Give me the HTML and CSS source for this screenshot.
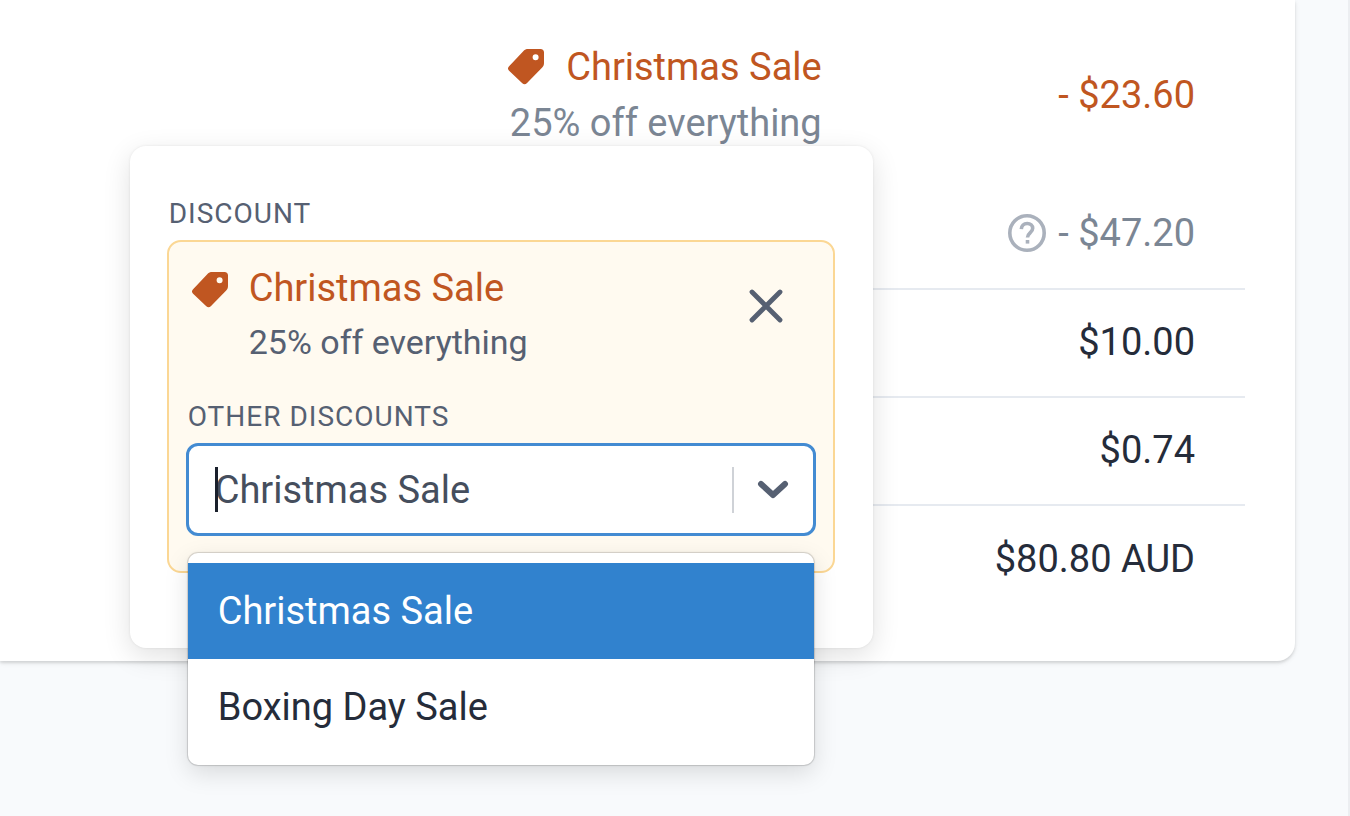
FILE: index.html
```
<!DOCTYPE html>
<html lang="en">
<head>
<meta charset="utf-8">
<meta name="viewport" content="width=device-width, initial-scale=1">
<title>Order summary</title>
<link rel="stylesheet" href="styles.css">
</head>
<body>
<svg class="sprite" aria-hidden="true">
  <symbol id="tag" viewBox="0 0 36 36">
    <path fill="currentColor" fill-rule="evenodd" d="M16.2 1.2C17.4.3 18.600 0 20 0h12.500C34.700 0 36 1.300 36 3.500V14c0 1.900-.5 3.200-1.800 4.500L18.800 34.200c-1.500 1.500-3 1.500-4.500 0L1.100 21.800c-1.500-1.500-1.500-3.100 0-4.600zM27.600 5.200a3 3 0 1 0 0 6 3 3 0 0 0 0-6z"/>
  </symbol>
</svg>
<main class="page">
  <section class="card">
    <table class="summary">
      <tbody>
        <tr class="discount-row">
          <th scope="row">
            <div class="anchor">
              <button type="button" class="discount">
                <span class="discount-name"><svg class="tag"><use href="#tag"/></svg>Christmas Sale</span>
                <span class="discount-note">25% off everything</span>
              </button>
              <div class="popover" role="dialog" aria-label="Discount">
                <h2 class="label">Discount</h2>
                <div class="panel">
                  <div class="applied">
                    <svg class="tag"><use href="#tag"/></svg>
                    <div class="applied-text">
                      <p class="applied-name">Christmas Sale</p>
                      <p class="applied-note">25% off everything</p>
                    </div>
                    <button type="button" class="close" aria-label="Remove discount">
                      <svg viewBox="0 0 34 34"><path d="M3 3l28 28M31 3L3 31"/></svg>
                    </button>
                  </div>
                  <label class="label other" for="other">Other discounts</label>
                  <div class="picker">
                    <div class="control">
                      <input id="other" class="field" type="text" role="combobox" aria-expanded="true" aria-controls="options" value="Christmas Sale">
                      <span class="caret"></span>
                      <span class="divider"></span>
                      <button type="button" class="toggle" aria-label="Toggle options">
                        <svg viewBox="0 0 32 20"><path d="M4 4l12 11L28 4"/></svg>
                      </button>
                    </div>
                    <ul class="menu" id="options" role="listbox">
                      <li class="option selected" role="option" aria-selected="true">Christmas Sale</li>
                      <li class="option" role="option" aria-selected="false">Boxing Day Sale</li>
                    </ul>
                  </div>
                </div>
              </div>
            </div>
          </th>
          <td class="accent">- $23.60</td>
        </tr>
        <tr class="saving-row">
          <th></th>
          <td class="muted">
            <span class="saving">
              <svg class="help" viewBox="0 0 38 38"><circle cx="19" cy="19" r="17.200"/><path d="M13.300 15.200c.2-3.500 2.500-5.700 5.900-5.700 3.300 0 5.500 2 5.500 4.800 0 4.500-5.200 4.700-5.200 9.100"/><path class="dot" d="M17.700 26h3.600v3.600h-3.600z"/></svg>
              - $47.20
            </span>
          </td>
        </tr>
        <tr class="line-row"><th></th><td>$10.00</td></tr>
        <tr class="line-row"><th></th><td>$0.74</td></tr>
        <tr class="line-row"><th></th><td>$80.80 AUD</td></tr>
      </tbody>
    </table>
  </section>
</main>
</body>
</html>
```

FILE: styles.css
```
* {
  box-sizing: border-box;
}

body {
  margin: 0;
  background: #f8fafc;
  color: #252c3a;
  font-family: Roboto, "Liberation Sans", sans-serif;
  font-size: 38px;
  line-height: 56px;
}

button,
input {
  font: inherit;
  color: inherit;
  border: 0;
  padding: 0;
  background: none;
}

h2,
p,
ul {
  margin: 0;
  padding: 0;
  font-weight: 400;
}

.sprite {
  position: absolute;
  width: 0;
  height: 0;
}

.page {
  min-height: 100vh;
  padding-right: 53px;
  border-right: 2px solid #eceef1;
}

.card {
  padding: 0 50px 48px 0;
  background: #fff;
  border-radius: 0 0 18px 0;
  box-shadow: 0 2px 3px rgba(0, 0, 0, 0.12), 0 2px 6px rgba(0, 0, 0, 0.06);
}

.summary {
  width: 100%;
  border-collapse: collapse;
}

.summary th,
.summary td {
  padding: 0;
  font-weight: 400;
  text-align: right;
  white-space: nowrap;
}

.summary td {
  width: 34%;
  padding-right: 50px;
}

.discount-row > * {
  height: 190px;
}

.saving-row > * {
  height: 99px;
  vertical-align: top;
}

.saving-row td {
  padding-top: 15px;
}

.line-row td {
  height: 108px;
  padding-bottom: 2px;
  border-top: 2px solid #e6eaf0;
}

.accent {
  color: #c05621;
}

.muted {
  color: #7b8694;
}

.anchor {
  position: relative;
}

.discount {
  display: inline-flex;
  flex-direction: column;
  align-items: flex-end;
}

.discount-name {
  display: flex;
  align-items: center;
  gap: 22px;
  color: #c05621;
}

.discount-note {
  color: #7b8694;
}

.tag {
  flex: none;
  width: 36px;
  height: 36px;
  color: #c05621;
}

.saving {
  display: inline-flex;
  align-items: center;
  gap: 12px;
}

.help {
  width: 38px;
  height: 38px;
  fill: none;
  stroke: #aab1bc;
  stroke-width: 3.600;
}

.help .dot {
  fill: #aab1bc;
  stroke: none;
}

.popover {
  position: absolute;
  z-index: 1;
  top: calc(100% - 5px);
  right: -51px;
  width: 743px;
  padding: 48px 38px 75px 37px;
  background: #fff;
  border-radius: 16px;
  box-shadow: 0 0 3px rgba(0, 0, 0, 0.08), 0 8px 28px rgba(0, 0, 0, 0.12);
  text-align: left;
}

.label {
  display: block;
  margin-bottom: 6px;
  padding-left: 2px;
  color: #566072;
  font-size: 28px;
  line-height: 40px;
  letter-spacing: 1px;
  text-transform: uppercase;
}

.panel {
  padding: 18px 17px 35px;
  background: #fffaf0;
  border: 2px solid #fbd794;
  border-radius: 14px;
}

.applied {
  display: flex;
  align-items: flex-start;
  padding: 0 32px 0 6px;
}

.applied .tag {
  margin: 12px 21px 0 0;
}

.applied-text {
  flex: 1;
}

.applied-name {
  color: #c05621;
}

.applied-note {
  color: #566072;
  font-size: 34px;
  line-height: 52px;
}

.close {
  width: 36px;
  height: 36px;
  margin-top: 28px;
  display: grid;
  place-items: center;
}

.close svg {
  width: 34px;
  height: 34px;
  fill: none;
  stroke: #566072;
  stroke-width: 4.800;
  stroke-linecap: round;
}

.other {
  margin-top: 29px;
}

.picker {
  position: relative;
}

.control {
  position: relative;
  display: flex;
  align-items: center;
  height: 93px;
  padding-left: 26px;
  background: #fff;
  border: 3px solid #438bd2;
  border-radius: 12px;
}

.field {
  flex: 1;
  min-width: 0;
  color: #454e5d;
  outline: 0;
}

.caret {
  position: absolute;
  left: 26px;
  width: 3px;
  height: 45px;
  background: #1a202c;
}

.divider {
  width: 2px;
  height: 46px;
  background: #cfd2d7;
}

.toggle {
  width: 79px;
  height: 80px;
  display: grid;
  place-items: center;
}

.toggle svg {
  width: 32px;
  height: 20px;
  fill: none;
  stroke: #566072;
  stroke-width: 6;
  stroke-linecap: round;
  stroke-linejoin: round;
}

.menu {
  position: absolute;
  z-index: 2;
  top: calc(100% + 17px);
  left: 2px;
  right: 2px;
  padding: 10px 0;
  background: #fff;
  border-radius: 10px;
  box-shadow: 0 0 0 1px rgba(0, 0, 0, 0.1), 0 0 3px rgba(0, 0, 0, 0.14), 0 8px 24px rgba(0, 0, 0, 0.13);
  list-style: none;
}

.option {
  padding: 20px 30px;
}

.selected {
  background: #3182ce;
  color: #fff;
}
```
